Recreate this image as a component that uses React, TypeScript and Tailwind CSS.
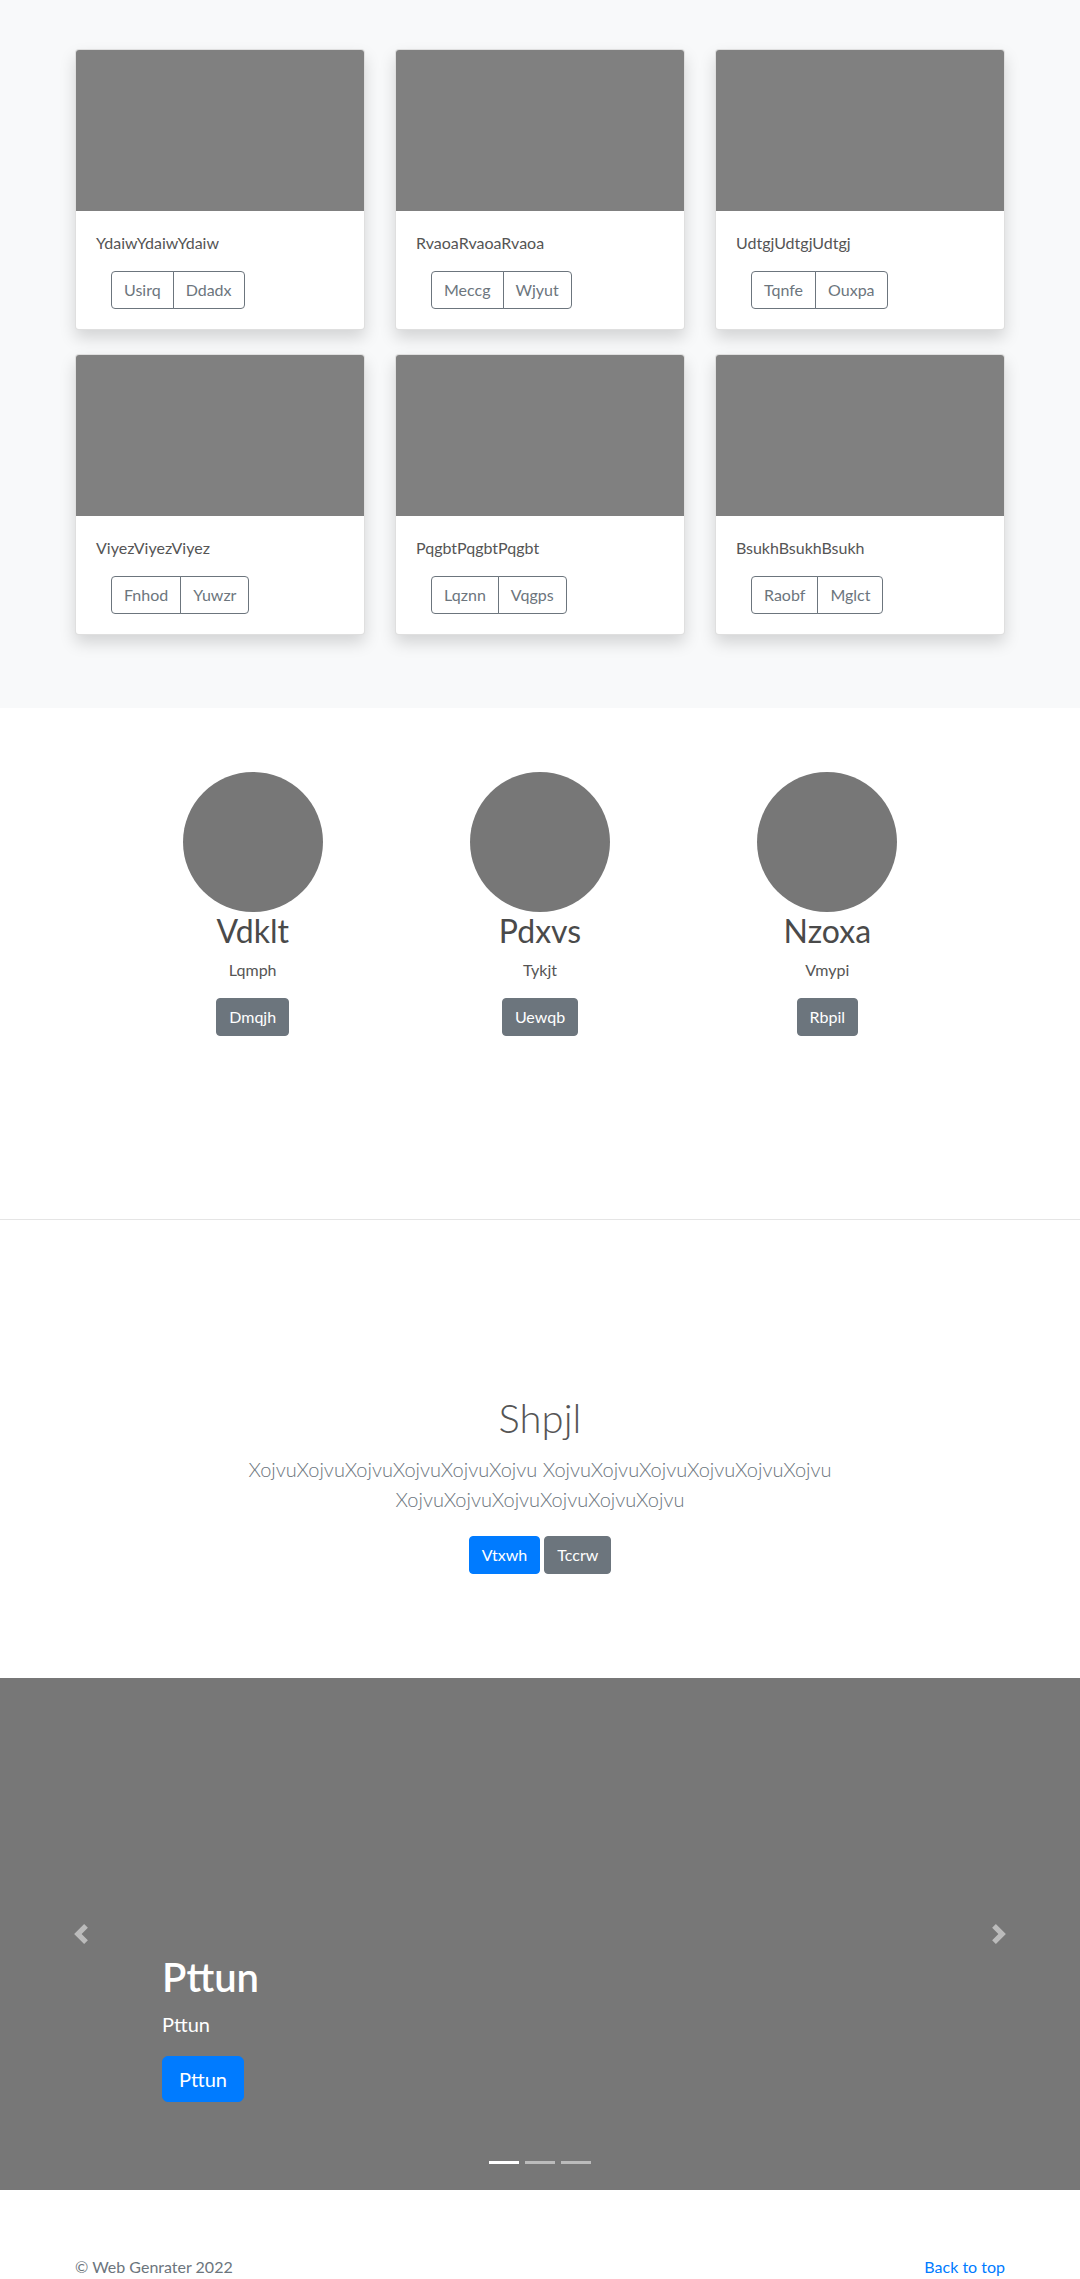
import React from 'react';

const cards = [
    { title: 'YdaiwYdaiwYdaiw', a: 'Usirq', b: 'Ddadx' },
    { title: 'RvaoaRvaoaRvaoa', a: 'Meccg', b: 'Wjyut' },
    { title: 'UdtgjUdtgjUdtgj', a: 'Tqnfe', b: 'Ouxpa' },
    { title: 'ViyezViyezViyez', a: 'Fnhod', b: 'Yuwzr' },
    { title: 'PqgbtPqgbtPqgbt', a: 'Lqznn', b: 'Vqgps' },
    { title: 'BsukhBsukhBsukh', a: 'Raobf', b: 'Mglct' },
];

const people = [
    { name: 'Vdklt', sub: 'Lqmph', btn: 'Dmqjh' },
    { name: 'Pdxvs', sub: 'Tykjt', btn: 'Uewqb' },
    { name: 'Nzoxa', sub: 'Vmypi', btn: 'Rbpil' },
];

function Card({ title, a, b }: { title: string; a: string; b: string }) {
    return (
        <div className="bg-white rounded border border-black/[.125] overflow-hidden shadow-[0_8px_16px_rgba(0,0,0,0.15)]">
            <div className="h-[161px] bg-[#808080]" />
            <div className="p-5">
                <p className="text-base leading-6 text-[#555] mb-4">{title}</p>
                <div className="inline-flex ml-[15px]">
                    <button className="px-3 py-[6px] text-base leading-6 text-[#6c757d] border border-[#6c757d] rounded-l">
                        {a}
                    </button>
                    <button className="-ml-px px-3 py-[6px] text-base leading-6 text-[#6c757d] border border-[#6c757d] rounded-r">
                        {b}
                    </button>
                </div>
            </div>
        </div>
    );
}

export default function App() {
    return (
        <div className="font-[Lato,'Open_Sans',sans-serif] bg-white">
            {/* Album */}
            <section className="bg-[#f8f9fa] pt-[49px] pb-[73px]">
                <div className="w-[960px] mx-auto px-[15px] grid grid-cols-3 gap-x-[30px] gap-y-6">
                    {cards.map((c) => (
                        <Card key={c.title} {...c} />
                    ))}
                </div>
            </section>

            {/* Marketing */}
            <section className="pt-16 pb-[183px] border-b border-black/10">
                <div className="w-[862px] mx-auto grid grid-cols-3">
                    {people.map((p) => (
                        <div key={p.name} className="flex flex-col items-center text-center">
                            <div className="w-[140px] h-[140px] rounded-full bg-[#777]" />
                            <h2 className="text-[32px] leading-[1.2] text-[#4a4a4a] mb-2">{p.name}</h2>
                            <p className="text-base leading-6 text-[#555] mb-4">{p.sub}</p>
                            <button className="bg-[#6c757d] text-white rounded border border-[#6c757d] px-3 py-[6px] text-base leading-6">
                                {p.btn}
                            </button>
                        </div>
                    ))}
                </div>
            </section>

            {/* Jumbotron */}
            <section className="pt-[174px] pb-[104px] text-center">
                <h1 className="text-[40px] leading-[1.2] font-light text-[#555] mb-3">Shpjl</h1>
                <p className="max-w-[700px] mx-auto text-[20px] leading-[30px] font-light text-[#6c757d] mb-[22px]">
                    XojvuXojvuXojvuXojvuXojvuXojvu XojvuXojvuXojvuXojvuXojvuXojvu XojvuXojvuXojvuXojvuXojvuXojvu
                </p>
                <div className="flex justify-center gap-1">
                    <button className="bg-[#007bff] text-white rounded border border-[#007bff] px-3 py-[6px] text-base leading-6">Vtxwh</button>
                    <button className="bg-[#6c757d] text-white rounded border border-[#6c757d] px-3 py-[6px] text-base leading-6">Tccrw</button>
                </div>
            </section>

            {/* Carousel */}
            <section className="relative h-[512px] bg-[#777] overflow-hidden">
                <div className="absolute left-0 top-0 bottom-0 w-[15%] flex items-center justify-center opacity-50">
                    <svg width="20" height="20" viewBox="0 0 8 8" fill="#fff">
                        <path d="M5.25 0l-4 4 4 4 1.5-1.5L4.25 4l2.5-2.5L5.25 0z" />
                    </svg>
                </div>
                <div className="absolute right-0 top-0 bottom-0 w-[15%] flex items-center justify-center opacity-50">
                    <svg width="20" height="20" viewBox="0 0 8 8" fill="#fff">
                        <path d="M2.75 0l-1.5 1.5L3.75 4l-2.5 2.5L2.75 8l4-4-4-4z" />
                    </svg>
                </div>
                <div className="absolute left-[15%] right-[15%] bottom-[88px] text-white text-left">
                    <h1 className="text-[40px] leading-[1.2] font-semibold mb-2">Pttun</h1>
                    <p className="text-[20px] leading-[30px] mb-[17px]">Pttun</p>
                    <button className="bg-[#007bff] text-white rounded-md border border-[#007bff] px-4 py-[7px] text-[20px] leading-[30px]">Pttun</button>
                </div>
                <ol className="absolute bottom-0 left-0 right-0 flex justify-center mb-4">
                    <li className="w-[30px] h-[3px] mx-[3px] my-[10px] bg-white" />
                    <li className="w-[30px] h-[3px] mx-[3px] my-[10px] bg-white opacity-50" />
                    <li className="w-[30px] h-[3px] mx-[3px] my-[10px] bg-white opacity-50" />
                </ol>
            </section>

            {/* Footer */}
            <footer className="pt-[65px]">
                <div className="w-[960px] mx-auto px-[15px] flex justify-between text-base leading-6">
                    <p className="text-[#6c757d]">© Web Genrater 2022</p>
                    <a href="#" className="text-[#007bff]">Back to top</a>
                </div>
            </footer>
        </div>
    );
}
